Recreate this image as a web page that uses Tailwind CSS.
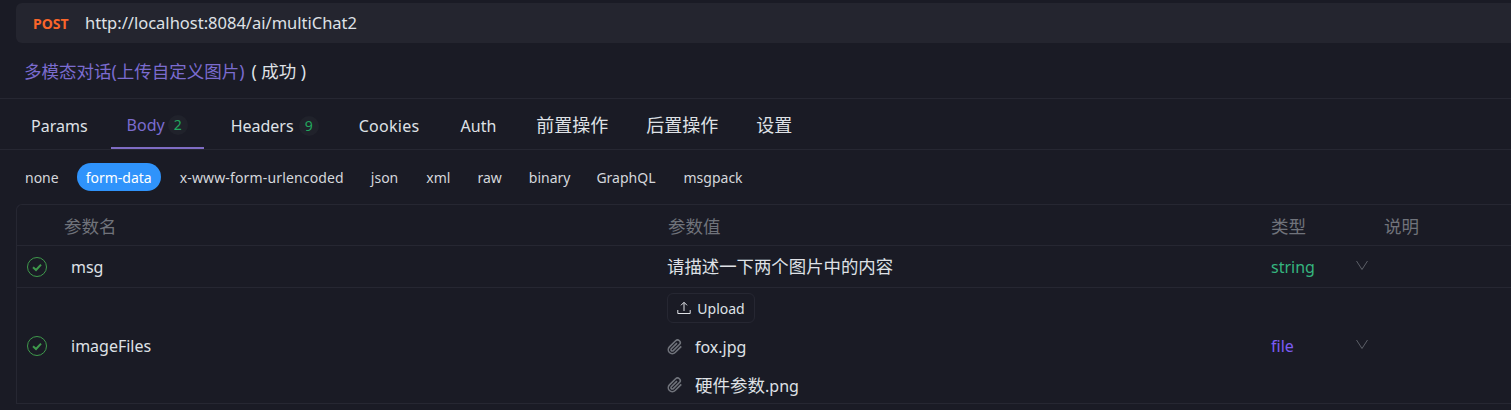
<!DOCTYPE html>
<html lang="en">

<head>
  <meta charset="UTF-8">
  <script src="https://cdn.jsdelivr.net/npm/@tailwindcss/browser@4"></script>
  <title>POST multiChat2</title>
</head>

<body class="h-[410px] overflow-hidden bg-[#1a1b25] text-[#dfe1e6] font-['Noto_Sans','Noto_Sans_CJK_SC',sans-serif]">
  <!-- url bar -->
  <div class="pl-4 pt-[3px]">
    <div class="h-10 flex items-center bg-[#24252f] rounded-l-md pl-[17px]">
      <span class="w-[52px] text-[14px] font-bold text-[#f9652a]">POST</span>
      <span class="text-[16.500px]">http://localhost:8084/ai/multiChat2</span>
    </div>
  </div>

  <!-- title -->
  <div class="h-[56px] flex items-center pl-6 pt-[2px] border-b border-[#262732] text-[17.500px]">
    <span class="text-[#7b6ccf]">多模态对话(上传自定义图片)</span>
    <span class="ml-[7px]">( 成功 )</span>
  </div>

  <!-- tabs -->
  <div class="h-[51px] flex gap-2 pl-[15px] border-b border-[#262732] text-[16px]">
    <div class="px-4 pt-[3px] flex items-center">Params</div>
    <div class="-ml-[1px] px-4 pt-[3px] flex items-center gap-[3px] border-b-2 border-[#7f6cc4] text-[#7b6ccf]">Body
      <span class="w-5 h-5 rounded-full bg-[#20222b] flex items-center justify-center text-[14px] text-[#22a85f]">2</span>
    </div>
    <div class="ml-[3px] px-4 pt-[3px] flex items-center gap-[5px]">Headers
      <span class="w-5 h-5 rounded-full bg-[#20222b] flex items-center justify-center text-[14px] text-[#22a85f]">9</span>
    </div>
    <div class="pl-4 pr-[17px] pt-[3px] flex items-center tracking-[0.300px]">Cookies</div>
    <div class="px-4 pt-[3px] flex items-center">Auth</div>
    <div class="px-4 pt-[3px] flex items-center text-[18px]">前置操作</div>
    <div class="-ml-[2px] px-4 pt-[3px] flex items-center text-[18px]">后置操作</div>
    <div class="-ml-[2px] px-4 pt-[3px] flex items-center text-[18px]">设置</div>
  </div>

  <!-- body types -->
  <div class="h-[54px] flex items-center pl-[25px] text-[14px] text-[#d5d7dc]">
    <span class="mr-[18px]">none</span>
    <span class="h-7 w-[84px] mr-[19px] rounded-full bg-[#2f93fb] text-white flex items-center justify-center">form-data</span>
    <span class="mr-[27px] tracking-[0.150px]">x-www-form-urlencoded</span>
    <span class="mr-[28px]">json</span>
    <span class="mr-[27px]">xml</span>
    <span class="mr-[27px]">raw</span>
    <span class="mr-[26px]">binary</span>
    <span class="mr-[28px]">GraphQL</span>
    <span>msgpack</span>
  </div>

  <!-- params table -->
  <div class="ml-4 border-l border-t border-[#262732] rounded-tl-md">
    <div class="h-[41px] flex items-center pt-[2px] border-b border-[#262732] text-[17.500px] text-[#70737b]">
      <div class="w-[651px] pl-[47px]">参数名</div>
      <div class="w-[603px]">参数值</div>
      <div class="w-[113px]">类型</div>
      <div>说明</div>
    </div>

    <div class="h-[42px] flex items-center border-b border-[#262732] text-[16px]">
      <div class="w-[650px] flex items-center pl-[10px]">
        <svg class="w-5 h-5 mr-[24px]" viewBox="0 0 20 20" fill="none">
          <circle cx="10" cy="10" r="9.500" stroke="#3f9a4c" />
          <path d="M6 10.300l3 2.700 5-5.400" stroke="#3f9a4c" stroke-width="2" />
        </svg>
        msg
      </div>
      <div class="w-[604px] text-[17.400px]">请描述一下两个图片中的内容</div>
      <div class="w-[85px] text-[#35b57f]">string</div>
      <svg class="w-3 h-3 -mt-[3px]" viewBox="0 0 12 12" fill="none">
        <path d="M.5 2l5.500 8.500 5.500-8.500" stroke="#5c5f67" />
      </svg>
    </div>

    <div class="h-[116px] flex items-center border-b border-[#262732] text-[16px]">
      <div class="w-[650px] flex items-center pl-[10px]">
        <svg class="w-5 h-5 mr-[24px]" viewBox="0 0 20 20" fill="none">
          <circle cx="10" cy="10" r="9.500" stroke="#3f9a4c" />
          <path d="M6 10.300l3 2.700 5-5.400" stroke="#3f9a4c" stroke-width="2" />
        </svg>
        imageFiles
      </div>
      <div class="w-[604px] self-start pt-[5px] flex flex-col">
        <div class="w-[88px] h-[30px] flex items-center justify-center gap-[6px] rounded-md border border-[#262732] text-[14px]">
          <svg class="w-[14px] h-[14px]" viewBox="0 0 14 14" fill="none" stroke="#dfe1e6">
            <path d="M7 10V1.500M4 4.300l3-3 3 3M.8 9v3.500h12.400V9" />
          </svg>
          Upload
        </div>
        <div class="flex items-center h-[38px] mt-[5px]">
          <svg class="w-4 h-4 mr-[12px]" viewBox="0 0 24 24" fill="none" stroke="#70737b" stroke-width="2.400">
            <path d="M21.400 11.100l-9.200 9.200a6 6 0 0 1-8.500-8.500l9.200-9.200a4 4 0 0 1 5.700 5.700l-9.200 9.200a2 2 0 0 1-2.900-2.900l8.500-8.500" />
          </svg>
          fox.jpg
        </div>
        <div class="flex items-center h-[38px]">
          <svg class="w-4 h-4 mr-[12px]" viewBox="0 0 24 24" fill="none" stroke="#70737b" stroke-width="2.400">
            <path d="M21.400 11.100l-9.200 9.200a6 6 0 0 1-8.500-8.500l9.200-9.200a4 4 0 0 1 5.700 5.700l-9.200 9.200a2 2 0 0 1-2.900-2.900l8.500-8.500" />
          </svg>
          <span><span class="text-[17.500px]">硬件参数</span>.png</span>
        </div>
      </div>
      <div class="w-[85px] text-[#7c5cf6]">file</div>
      <svg class="w-3 h-3 -mt-[3px]" viewBox="0 0 12 12" fill="none">
        <path d="M.5 2l5.500 8.500 5.500-8.500" stroke="#5c5f67" />
      </svg>
    </div>
  </div>
</body>

</html>
